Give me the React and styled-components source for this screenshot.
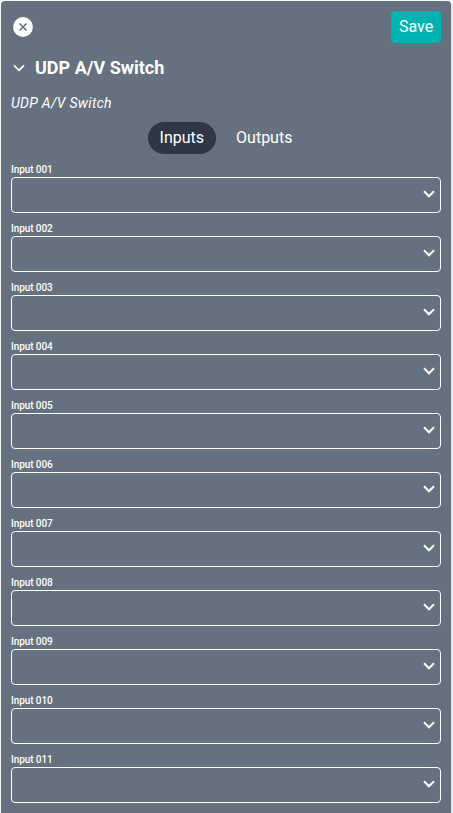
import React, { useState } from "react";
import styled, { createGlobalStyle } from "styled-components";

const GlobalStyle = createGlobalStyle`
  * { box-sizing: border-box; }
  body {
    margin: 0;
    background: #fafbfb;
    font-family: Roboto, sans-serif;
    color: #fff;
    overflow: hidden;
  }
  button { font-family: inherit; color: inherit; border: 0; padding: 0; cursor: pointer; }
`;

const Page = styled.main`
  height: 813px;
  padding: 1px 2px 0 1px;
  overflow: hidden;
`;

const Panel = styled.section`
  height: 830px;
  padding: 10px;
  border-radius: 4px;
  background: #66717f;
  box-shadow: 1px 1px 3px rgba(0, 0, 0, 0.16);
`;

const Toolbar = styled.header`
  display: flex;
  align-items: center;
  justify-content: space-between;
  height: 32px;
`;

const IconButton = styled.button`
  display: flex;
  margin-left: 2px;
  background: none;
`;

const SaveButton = styled.button`
  width: 50px;
  height: 32px;
  border-radius: 4px;
  background: #00b3b3;
  font-size: 16px;
  line-height: 32px;
`;

const TitleRow = styled.div`
  display: flex;
  align-items: center;
  height: 24px;
  margin-top: 13px;
  padding-left: 2px;
  gap: 10px;
`;

const Title = styled.h1`
  margin: 0;
  font-size: 18px;
  font-weight: 700;
  line-height: 24px;
`;

const Subtitle = styled.p`
  margin: 13px 0 0;
  font-size: 14px;
  font-style: italic;
  line-height: 20px;
  letter-spacing: 0.28px;
`;

const Tabs = styled.nav`
  display: flex;
  justify-content: center;
  gap: 8px;
  margin-top: 9px;
`;

const Tab = styled.button`
  height: 32px;
  padding: 0 12px;
  border-radius: 16px;
  background: ${({ $active }) => ($active ? "#2f3645" : "transparent")};
  font-size: 16px;
  line-height: 32px;
`;

const Fields = styled.div`
  display: grid;
  grid-auto-rows: 49px;
  gap: 10px;
  margin-top: 10px;
`;

const Field = styled.div`
  display: flex;
  flex-direction: column;
`;

const Label = styled.span`
  height: 13px;
  font-size: 10px;
  font-weight: 500;
  line-height: 12px;
  letter-spacing: -0.1px;
`;

const SelectBox = styled.button`
  display: flex;
  align-items: center;
  justify-content: flex-end;
  height: 36px;
  border: 1px solid #fff;
  border-radius: 4px;
  padding: 0 5px 2px 0;
  background: transparent;
`;

function CloseIcon() {
  return (
    <svg width="20" height="20" viewBox="0 0 20 20">
      <circle cx="10" cy="10" r="9.9" fill="#fff" />
      <path d="M6.5 6.5l7 7M13.5 6.5l-7 7" stroke="#66717f" strokeWidth="1.6" />
    </svg>
  );
}

function Chevron({ weight = 2 }) {
  return (
    <svg width="12" height="8" viewBox="0 0 12 8" fill="none">
      <path d="M1 1.3l5 5 5-5" stroke="#fff" strokeWidth={weight} />
    </svg>
  );
}

const inputs = Array.from({ length: 11 }, (_, i) => `Input ${String(i + 1).padStart(3, "0")}`);

export default function App() {
  const [tab, setTab] = useState("Inputs");
  return (
    <Page>
      <GlobalStyle />
      <Panel>
        <Toolbar>
          <IconButton aria-label="Close"><CloseIcon /></IconButton>
          <SaveButton>Save</SaveButton>
        </Toolbar>
        <TitleRow>
          <Chevron weight={1.7} />
          <Title>UDP A/V Switch</Title>
        </TitleRow>
        <Subtitle>UDP A/V Switch</Subtitle>
        <Tabs>
          {["Inputs", "Outputs"].map((name) => (
            <Tab key={name} $active={tab === name} onClick={() => setTab(name)}>{name}</Tab>
          ))}
        </Tabs>
        <Fields>
          {inputs.map((label) => (
            <Field key={label}>
              <Label>{label}</Label>
              <SelectBox aria-label={label}><Chevron /></SelectBox>
            </Field>
          ))}
        </Fields>
      </Panel>
    </Page>
  );
}
